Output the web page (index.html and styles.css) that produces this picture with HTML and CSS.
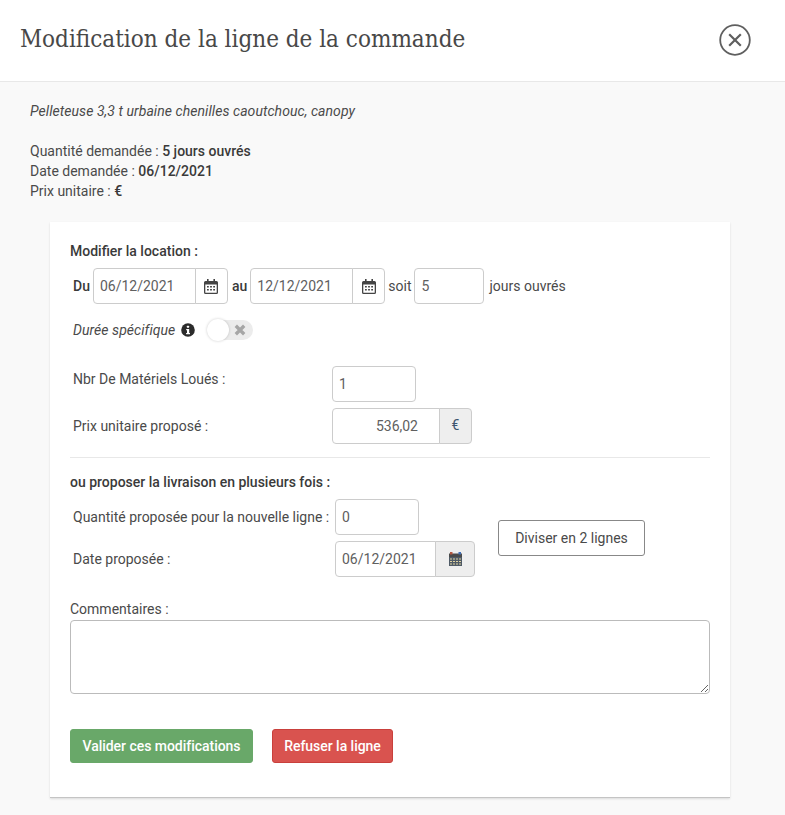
FILE: index.html
```html
<!DOCTYPE html>
<html lang="fr">

<head>
  <meta charset="UTF-8">
  <title>Modification de la ligne de la commande</title>
  <link rel="stylesheet" href="styles.css">
</head>

<body>
  <header class="modal__header">
    <h1>Modification de la ligne de la commande</h1>
    <button type="button" class="modal__close" aria-label="Fermer">
      <svg width="32" height="32" viewBox="0 0 32 32" fill="none" stroke="#5f5f5f">
        <circle cx="16" cy="16" r="14.8" stroke-width="1.8" />
        <path d="M10.2 10.2 21.8 21.8M21.8 10.2 10.2 21.8" stroke-width="2.2" />
      </svg>
    </button>
  </header>

  <main class="modal__body">
    <p class="product">Pelleteuse 3,3 t urbaine chenilles caoutchouc, canopy</p>
    <p class="summary">
      Quantité demandée : <b>5 jours ouvrés</b><br>
      Date demandée : <b>06/12/2021</b><br>
      Prix unitaire : <b>€</b>
    </p>

    <form class="card">
      <h2 class="card__title">Modifier la location :</h2>

      <div class="dates">
        <b>Du</b>
        <div class="group group--date">
          <input type="text" value="06/12/2021">
          <span class="group__addon">
            <svg class="icon-cal" width="14" height="15" viewBox="0 0 14 15">
              <path fill="#444" d="M3 0h1.6v2H9.400V0H11v2h1.500A1.500 1.500 0 0 1 14 3.500v10a1.500 1.500 0 0 1-1.500 1.500h-11A1.500 1.500 0 0 1 0 13.500v-10A1.500 1.500 0 0 1 1.500 2H3zM1.300 5.500v8c0 .1.100.2.200.2h11c.1 0 .2-.1.200-.2v-8z" />
              <path fill="#444" d="M3 7h1.800v1.500H3zM6.100 7h1.800v1.500H6.100zM9.200 7H11v1.500H9.200zM3 10h1.800v1.500H3zM6.100 10h1.800v1.500H6.100zM9.200 10H11v1.500H9.200z" />
            </svg>
          </span>
        </div>
        <b>au</b>
        <div class="group group--date">
          <input type="text" value="12/12/2021">
          <span class="group__addon">
            <svg class="icon-cal" width="14" height="15" viewBox="0 0 14 15">
              <path fill="#444" d="M3 0h1.6v2H9.400V0H11v2h1.500A1.500 1.500 0 0 1 14 3.500v10a1.500 1.500 0 0 1-1.500 1.500h-11A1.500 1.500 0 0 1 0 13.500v-10A1.500 1.500 0 0 1 1.500 2H3zM1.300 5.500v8c0 .1.100.2.200.2h11c.1 0 .2-.1.200-.2v-8z" />
              <path fill="#444" d="M3 7h1.800v1.500H3zM6.100 7h1.800v1.500H6.100zM9.200 7H11v1.500H9.200zM3 10h1.800v1.500H3zM6.100 10h1.800v1.500H6.100zM9.200 10H11v1.500H9.200z" />
            </svg>
          </span>
        </div>
        <span class="dates__soit">soit</span>
        <input type="text" class="field field--days" value="5">
        <span class="dates__unit">jours ouvrés</span>
      </div>

      <div class="specific">
        <i>Durée spécifique</i>
        <svg class="specific__info" width="14" height="14" viewBox="0 0 14 14">
          <circle cx="7" cy="7" r="6.800" fill="#2b2b2b" />
          <rect x="5.900" y="2.700" width="2.200" height="2.100" rx=".6" fill="#fff" />
          <path fill="#fff" d="M5.200 6h3v3.900h.8v1.300H5.100V9.900h.9V7.300h-.8z" />
        </svg>
        <span class="toggle">
          <span class="toggle__knob"></span>
          <svg class="toggle__x" width="12" height="12" viewBox="0 0 10 10">
            <path d="M1.500 1.500 8.500 8.500M8.500 1.500 1.500 8.500" stroke="#a6a6a6" stroke-width="2.800" />
          </svg>
        </span>
      </div>

      <div class="line line--qty">
        <label class="line__label line__label--top">Nbr De Matériels Loués :</label>
        <input type="text" class="field field--qty" value="1">
      </div>
      <div class="line line--price">
        <label class="line__label">Prix unitaire proposé :</label>
        <div class="group group--price">
          <input type="text" value="536,02">
          <span class="group__addon group__addon--grey group__addon--euro">€</span>
        </div>
      </div>

      <hr>

      <h2 class="card__title card__title--split">ou proposer la livraison en plusieurs fois :</h2>

      <div class="split">
        <div class="split__fields">
          <div class="line">
            <label class="line__label line__label--split">Quantité proposée pour la nouvelle ligne :</label>
            <input type="text" class="field field--qty" value="0">
          </div>
          <div class="line line--price">
            <label class="line__label line__label--split">Date proposée :</label>
            <div class="group group--split">
              <input type="text" value="06/12/2021">
              <span class="group__addon group__addon--grey">
                <svg width="13" height="14" viewBox="0 0 13 14">
                  <rect y="1.500" width="13" height="3.500" fill="#4a4a4a" />
                  <rect x="1" y="0" width="2.500" height="2.500" fill="#b5563f" />
                  <rect x="9.500" y="0" width="2.500" height="2.500" fill="#3f6db5" />
                  <rect y="5" width="13" height="9" fill="#4f5a66" />
                  <path d="M1 7h11M1 9.500h11M1 12h11" stroke="#e0d3a0" stroke-width="1" stroke-dasharray="2 1" />
                </svg>
              </span>
            </div>
          </div>
        </div>
        <button type="button" class="btn btn--split">Diviser en 2 lignes</button>
      </div>

      <label class="comment__label">Commentaires :</label>
      <textarea class="comment"></textarea>

      <div class="actions">
        <button type="button" class="btn btn--ok">Valider ces modifications</button>
        <button type="button" class="btn btn--no">Refuser la ligne</button>
      </div>
    </form>
  </main>
</body>

</html>
```

FILE: styles.css
```css
* {
  box-sizing: border-box;
}

body {
  margin: 0;
  height: 815px;
  overflow: hidden;
  background: #f9f9f9;
  color: #4a4a4a;
  font-family: "Roboto", sans-serif;
  font-size: 14px;
  line-height: 20px;
}

b {
  color: #3a3a3a;
  font-weight: 500;
}

.modal__header {
  display: flex;
  align-items: center;
  justify-content: space-between;
  height: 82px;
  padding: 0 35px 0 20px;
  background: #fff;
  border-bottom: 1px solid #e8e8e8;
}

.modal__header h1 {
  margin: -4px 0 0;
  color: #484848;
  font-family: "DejaVu Serif", serif;
  font-size: 24px;
  font-stretch: condensed;
  font-weight: 400;
  line-height: 32px;
}

.modal__close {
  display: flex;
  margin: -2px -1px 0 0;
  padding: 0;
  background: none;
  border: none;
}

.modal__body {
  padding: 19px 30px 0;
}

.product {
  margin: 0 0 20px;
  font-style: italic;
  letter-spacing: .06px;
}

.summary {
  margin: 0 0 21px;
}

.card {
  width: 680px;
  height: 576px;
  margin-left: 20px;
  padding: 19px 20px 0;
  background: #fff;
  border-bottom: 1px solid #c4c4c4;
  box-shadow: 0 1px 2px rgba(0, 0, 0, .12);
}

.card__title {
  margin: 0;
  color: #3a3a3a;
  font-size: 14px;
  font-weight: 500;
  line-height: 20px;
}

input {
  height: 36px;
  padding: 0 6px;
  color: #606060;
  background: #fff;
  border: 1px solid #ccc;
  border-radius: 4px;
  font-family: "Roboto", sans-serif;
  font-size: 14px;
}

.dates {
  display: flex;
  align-items: center;
  margin-top: 7px;
  padding-left: 3px;
}

.dates b {
  margin-right: 3px;
}

.dates .group+b {
  margin-left: 4px;
}

.dates .dates__soit {
  margin: 0 3px 0 3px;
}

.dates .dates__unit {
  margin-left: 5px;
}

.group {
  display: flex;
  height: 36px;
}

.group input {
  flex: 1;
  min-width: 0;
  border-radius: 4px 0 0 4px;
}

.group__addon {
  display: flex;
  align-items: center;
  justify-content: center;
  margin-left: -1px;
  background: #fff;
  border: 1px solid #ccc;
  border-radius: 0 4px 4px 0;
}

.group__addon--grey {
  background: #eee;
  color: #555;
}

.group__addon--euro {
  padding-bottom: 3px;
  color: #3d5570;
}

.group--date {
  width: 135px;
}

.group--date .group__addon {
  width: 33px;
}

.field--days {
  width: 70px;
}

.specific {
  display: flex;
  align-items: center;
  height: 24px;
  margin-top: 14px;
  padding-left: 3px;
}

.specific i {
  letter-spacing: .06px;
}

.specific__info {
  margin-left: 6px;
}

.toggle {
  position: relative;
  display: block;
  width: 46px;
  height: 20px;
  margin-left: 12px;
  background: #ececec;
  border-radius: 10px;
}

.toggle__knob {
  position: absolute;
  top: -1px;
  left: 0;
  width: 22px;
  height: 22px;
  background: #fff;
  border-radius: 50%;
  box-shadow: 0 0 3px rgba(0, 0, 0, .2);
}

.toggle__x {
  position: absolute;
  top: 4px;
  right: 7px;
}

.line {
  display: flex;
}

.line--qty {
  margin-top: 24px;
}

.line--price {
  align-items: center;
  margin-top: 6px;
}

.line__label {
  flex: none;
  width: 262px;
  padding-left: 3px;
}

.line__label--top {
  margin-top: 3px;
}

.line__label--split {
  width: 265px;
  white-space: nowrap;
  align-self: center;
}

.field--qty {
  width: 84px;
}

.group--price {
  width: 140px;
}

.group--price input {
  text-align: right;
  padding-right: 21px;
}

.group--price .group__addon {
  width: 33px;
}

.group--split .group__addon {
  width: 40px;
}

.group--split {
  width: 140px;
}

hr {
  margin: 13px 0 14px;
  border: none;
  border-top: 1px solid #e8e8e8;
}

.card__title--split {
  margin-bottom: 7px;
}

.split {
  display: flex;
}

.split__fields {
  width: 428px;
}

.btn {
  font-family: "Roboto", sans-serif;
  font-size: 14px;
  border-radius: 3px;
}

.btn--split {
  width: 147px;
  height: 36px;
  margin-top: 21px;
  color: #4a4a4a;
  background: #fff;
  border: 1px solid #888;
}

.comment__label {
  display: block;
  margin-top: 22px;
}

.comment {
  display: block;
  width: 640px;
  height: 74px;
  margin-top: 1px;
  background: #fff;
  border: 1px solid #bbb;
  border-top-width: 1.500px;
  border-radius: 4px;
}

.actions {
  display: flex;
  gap: 19px;
  margin-top: 35px;
}

.actions .btn {
  height: 34px;
  color: #fff;
  font-weight: 500;
  letter-spacing: -.03px;
}

.btn--ok {
  width: 183px;
  background: #69a869;
  border: 1px solid #69a869;
}

.btn--no {
  width: 121px;
  background: #d9534f;
  border: 1px solid #c9403c;
}
```
